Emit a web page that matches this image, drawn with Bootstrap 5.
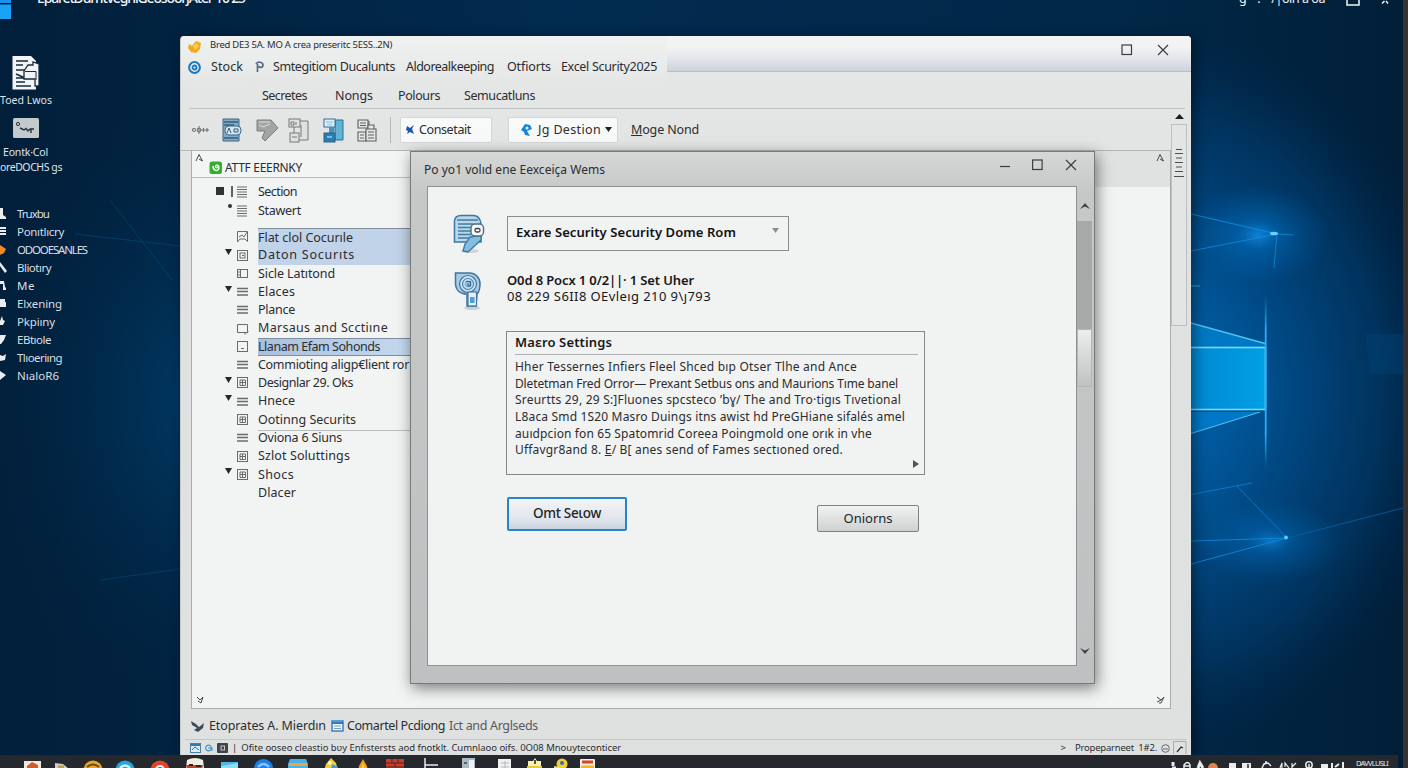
<!DOCTYPE html>
<html lang="en">
<head>
  <meta charset="UTF-8" />
  <meta name="viewport" content="width=device-width, initial-scale=1.0"/>
  <title>Excel Security 2025</title>
  <link href="https://cdn.jsdelivr.net/npm/bootstrap@5.3.0/dist/css/bootstrap.min.css" rel="stylesheet"/>
  <style>
    body {
      width: 1408px;
      height: 768px;
      background: #012a50;
      font-family: "Noto Sans", "Open Sans", sans-serif;
      font-size: 12.5px;
      line-height: 1;
      color: #2b2d30;
    }
    svg { display: block; flex: none; }
    [data-w] { display: inline-block; white-space: pre; }
    .wallpaper { top: 0; left: 0; }

    /* desktop */
    .top-strip { top: -10px; left: 0; width: 1403px; height: 30px; color: #f2f5f8; }
    .top-name { font-size: 14px; margin-left: 25px; padding-top: 1px; font-weight: 500; }
    .side-icons { top: 56px; left: 0; width: 100px; color: #dfe5ea; font-size: 10.5px; }
    .side-list { top: 205px; left: 0; color: #d8dee3; font-size: 11.5px; }
    .side-list .entry { height: 17.95px; gap: 10px; }

    /* main window */
    .app-window {
      left: 180px; top: 36px; width: 1011px; height: 719px;
      background: linear-gradient(#e6e8e8, #e0e2e2 30%, #dfe1e1);
      border-radius: 4px 4px 0 0;
      box-shadow: 3px 2px 14px rgba(0,0,0,.45);
      border-left: 1px solid #c9cccc;
    }
    .title-left { width: 486px; background: linear-gradient(#f0f1f1, #e6e8e8); border-radius: 4px 0 0 0; }
    .title-right { height: 36px; background: linear-gradient(#f2f3f3 30%, #e4e7ea 62%, #ccd3de); border-bottom: 1px solid #b7bec4; border-radius: 0 4px 0 0; padding: 0 22px 7px 0; gap: 24px; }
    .app-title { font-size: 9.5px; height: 17px; padding-left: 7px; }
    .menu-one { height: 28px; padding-left: 7px; }
    .menu-two { height: 37px; margin: -9px 6px 0 8px; padding-top: 12px; border-bottom: 1px solid #bfc2c3; }
    .tool-row { height: 42px; padding: 1px 0 0 11px; border-bottom: 1px solid #b2b5b6; }
    .tool-line { width: 1px; height: 26px; background: #b3b6b7; margin: 0 9px 0 12px; }
    .tool-btn { height: 26px; background: #f8f9f9; border: 1px solid #d4d6d8; border-radius: 2px; }
    .left-col { width: 990px; }
    .panel { margin-left: 10px; height: 558px; background: #f2f3f3; border: 1px solid #a9acad; border-top: 0; }
    .panel-band { height: 36px; background: #e0e2e2; }
    .tree-head { height: 27px; width: 220px; background: #f3f4f4; border-bottom: 1px solid #bbbec0; }
    .tree { width: 219px; margin-top: -9px; padding-top: 5px; background: #f2f3f3; }
    .tree-row { height: 18.27px; }
    .tree-row.first { height: 18.6px; }
    .arrow-cell { width: 45px; padding-left: 33px; }
    .icon-cell { width: 21px; }
    .tree-text { height: 100%; flex: 1; overflow: hidden; font-size: 12.5px; }
    .picked { background: #c0d3e8; }
    .picked-top { border-top: 1px solid #7f8c99; }
    .picked-one { background: linear-gradient(90deg, #a9bfdc, #c5d9ef); border-top: 1px solid #7d8ea3; border-bottom: 1px solid #7d8ea3; }
    .ruled { background: linear-gradient(#bcbfc0, #bcbfc0) 0 1px / 100% 1px no-repeat; }
    .gutter { width: 20px; }
    .gutter-track { width: 16px; height: 202px; border: 1px solid #bdc0c1; background: #e3e5e5; }
    .foot-one { height: 30px; padding-left: 10px; padding-top: 4px; }
    .foot-two { height: 15px; margin: 0 4px; padding: 2px 0 0 5px; border-top: 1px solid #c4c7c8; font-size: 9.5px; }

    /* dialog */
    .dialog-window {
      left: 410px; top: 151px; width: 685px; height: 533px;
      border: 1px solid #77797a;
      background: linear-gradient(#d6d7d7, #c6c8c8 40px, #bec1c1);
      box-shadow: 2px 4px 14px rgba(0,0,0,.5);
    }
    .dialog-title { height: 34px; padding-left: 13px; }
    .dialog-body { margin-left: 16px; width: 650px; height: 480px; background: #f1f2f2; border: 1px solid #8d9090; }
    .dialog-scroll { width: 15px; }
    .thumb-dark { width: 15px; height: 108px; background: #a7a8a8; }
    .thumb-light { width: 15px; height: 58px; background: linear-gradient(#eceded, #c0c2c2); border: 1px solid #b5b7b7; }
    .pick-box { width: 282px; height: 35px; border: 1px solid #8b8d8e; color: #101113; font-size: 13px; font-weight: 600; }
    .macro-box { width: 419px; height: 144px; border: 1px solid #85888a; padding: 4px 6px 0 8px; }
    .macro-head { height: 19px; border-bottom: 1px solid #aeb1b2; font-size: 13px; font-weight: 600; color: #17181a; }
    .macro-text { font-size: 12px; padding-top: 4px; }
    .macro-text div { height: 16.7px; line-height: 16.7px; }
    .btn-main { width: 120px; height: 34px; border: 2px solid #2585c9; border-radius: 2px; background: linear-gradient(#f3f4f5, #e3e8ee 60%, #cbd3dd); font-size: 13.5px; font-weight: 500; }
    .btn-second { width: 102px; height: 27px; border: 1px solid #7f8283; border-radius: 2px; background: linear-gradient(#f1f2f2, #cfd1d1); font-size: 13px; margin-top: 8px; }

    /* taskbar */
    .task-bar { left: 0; top: 755px; width: 1398px; height: 13px; background: #25292d; overflow: hidden; }
    .task-icons { display: grid; grid-template-columns: 30px 30px 31px 34px 35px 35px 34px 35px 34px 32px 31px 34px 37px 39px 33px 27px 26px 26px; margin-left: 17px; }
    .task-icons svg { margin: 3px auto 0; }
    .edge-strip { right: 0; top: 0; width: 5px; height: 768px; background: #37322f; }
  </style>
</head>
<body class="position-relative overflow-hidden">

<!-- wallpaper -->
<svg class="wallpaper position-absolute" width="1408" height="768" viewBox="0 0 1408 768" fill="none">
  <defs>
    <radialGradient id="sky" gradientUnits="userSpaceOnUse" cx="0" cy="0" r="1" gradientTransform="translate(1150 390) scale(310 370)">
      <stop offset="0" stop-color="#006ab4"/><stop offset=".3" stop-color="#005597"/><stop offset=".5" stop-color="#00447c"/><stop offset=".75" stop-color="#003663" stop-opacity=".85"/><stop offset="1" stop-color="#00274c" stop-opacity="0"/>
    </radialGradient>
    <radialGradient id="leftsky" gradientUnits="userSpaceOnUse" cx="0" cy="0" r="1" gradientTransform="translate(220 400) scale(260 330)">
      <stop offset="0" stop-color="#003d6c"/><stop offset="1" stop-color="#01233f" stop-opacity="0"/>
    </radialGradient>
    <linearGradient id="base" x1="0" x2="1" y1="0" y2="0"><stop offset="0" stop-color="#011f3a"/><stop offset=".4" stop-color="#012b50"/><stop offset=".8" stop-color="#012848"/><stop offset="1" stop-color="#001e38"/></linearGradient>
    <radialGradient id="spark"><stop offset="0" stop-color="#1aa0ff" stop-opacity=".9"/><stop offset=".3" stop-color="#0080dc" stop-opacity=".5"/><stop offset="1" stop-color="#0070c0" stop-opacity="0"/></radialGradient>
    <linearGradient id="beam" x1="0" x2="0" y1="0" y2="1"><stop offset="0" stop-color="#20a8f4" stop-opacity="0"/><stop offset=".2" stop-color="#28b0f8"/><stop offset=".8" stop-color="#28b0f8"/><stop offset="1" stop-color="#20a8f4" stop-opacity="0"/></linearGradient>
    <linearGradient id="pane" x1="0" x2="1" y1="0" y2="0"><stop offset="0" stop-color="#0084cf"/><stop offset="1" stop-color="#00a0e6"/></linearGradient>
  </defs>
  <rect width="1408" height="768" fill="url(#base)"/>
  <rect width="1408" height="768" fill="url(#leftsky)"/>
  <rect width="1408" height="768" fill="url(#sky)"/>
  <ellipse cx="1258" cy="235" rx="72" ry="50" fill="url(#spark)" opacity=".75"/>
  <ellipse cx="1270" cy="541" rx="75" ry="42" fill="url(#spark)" opacity=".6"/>
  <path d="M1191 214L1277 234L1191 251" stroke="#0e90ea" stroke-width="1.2" opacity=".75"/>
  <path d="M1277 234L1274 268M1277 234L1293 235" stroke="#1a9bec" opacity=".6"/>
  <ellipse cx="1274" cy="233.500" rx="4" ry="1.800" fill="#62d8ff"/>
  <path d="M1191 286H1200" stroke="#2fa0d8"/>
  <path d="M1191 323L1265 343V347H1191Z" fill="#0078c4"/>
  <path d="M1191 411H1262L1191 433Z" fill="#0078c8"/>
  <path d="M1191 323L1265 343.500M1191 433.500L1260 412" stroke="#4ec0ee" stroke-width="1.3"/>
  <rect x="1180" y="347.500" width="85.500" height="62" fill="url(#pane)" stroke="#7bd8f8" stroke-width="1.600"/>
  <path d="M1191 411.500H1265" stroke="#06527d"/>
  <rect x="1264.800" y="296" width="1.800" height="172" fill="url(#beam)"/>
  <path d="M1191 494.500L1252 483M1237 486L1287 538" stroke="#0c84d8" opacity=".75"/>
  <path d="M1191 564L1287 538M1191 541L1287 538" stroke="#0f8de4" opacity=".8"/>
  <path d="M1287 538L1403 508" stroke="#0a6cb0" opacity=".65"/>
  <circle cx="1286" cy="537.500" r="2" fill="#50c8ff"/>
  <path d="M75 234L180 246M110 200L172 280M100 580L180 569" stroke="#07558c" opacity=".45"/>
  <path d="M1366 334H1403V374H1370Z" fill="#00477f" opacity=".35"/>
</svg>

<!-- clipped strip at the top edge -->
<div class="top-strip position-absolute d-flex justify-content-between overflow-hidden">
  <div class="d-flex">
    <svg width="12" height="30" viewBox="0 0 12 30"><rect width="11" height="13" fill="#1592f2"/><rect y="14.500" width="11" height="14.500" fill="#18a3f8"/></svg>
    <span class="top-name" data-w="208">EparetDumtvegniGeosoorjAter 10 25</span>
  </div>
  <div class="d-flex">
    <span style="margin-right:20px;padding-top:3px" data-w="86">g    .    /|oiri a oa</span>
    <svg width="58" height="30" viewBox="0 0 58 30" fill="none" stroke="#f2f5f8"><rect x="2" y="2" width="12" height="13" stroke-width="1.500"/><path d="M37 13.500L39.500 11M43 13.500L41 11" stroke-width="1.500"/></svg>
  </div>
</div>

<!-- desktop shortcuts -->
<div class="side-icons position-absolute d-flex flex-column">
  <svg class="ms-2" width="36" height="35" viewBox="0 0 36 35">
    <path d="M4.500 0H23L28 5V33.500H4.500Z" fill="#f2f4f5"/>
    <path d="M8 5H20M8 9H15M8 14H18M8 18L17 22M8 22H17M8 26H17M8 30H23" stroke="#142c42" stroke-width="1.700"/>
    <path d="M16 15L20 9H25V6L31 8V30H27V23H16Z" fill="#f2f4f5" stroke="#142c42" stroke-width="1.300"/>
    <path d="M17 15.500H28V24" stroke="#142c42" fill="none"/>
  </svg>
  <span class="mt-1 ms-0" data-w="52">Toed Lwos</span>
  <svg style="margin:9px 0 0 12px" width="28" height="24" viewBox="0 0 28 24">
    <rect x="1" y="3" width="26" height="20" rx="1.500" fill="#c4c9cd"/><circle cx="6" cy="9" r="1.600" fill="none" stroke="#25303a"/><path d="M8 13L12 15L14 13.500L16 16L18 14H22M19 14V18" stroke="#25303a" stroke-width="1.400" fill="none"/>
  </svg>
  <span class="mt-1 pt-1" style="margin-left:3px" data-w="45">Eontk·Col</span>
  <span style="padding-top:5px" data-w="62">oreDOCHS gs</span>
</div>
<div class="side-list position-absolute" id="sideList"></div>

<!-- main window -->
<div class="app-window position-absolute d-flex flex-column">
  <div class="d-flex">
    <div class="title-left">
      <div class="app-title d-flex align-items-center gap-2">
        <svg width="14" height="14" viewBox="0 0 14 14" style="margin-top:4px"><path d="M1 4L4 6L8 1L13 3L12 9L8 13L3 12L0 8Z" fill="#f3a91b"/><path d="M5 6L9 3L11 7L7 10Z" fill="#ffcf4a"/></svg>
        <span data-w="182">Bred DE3 5A. MO A crea preseritc 5ESS..2N)</span>
      </div>
      <div class="menu-one d-flex align-items-center">
        <svg width="13" height="13" viewBox="0 0 13 13" fill="none"><circle cx="6.500" cy="6.500" r="5.400" stroke="#1b78bd" stroke-width="2"/><circle cx="6.500" cy="6.500" r="2" stroke="#1b78bd" stroke-width="1.800"/></svg>
        <span style="margin-left:10px" data-w="32">Stock</span>
        <svg style="margin-left:12px" width="9" height="12" viewBox="0 0 9 12" fill="none" stroke="#5a6a86" stroke-width="1.700"><path d="M1 3C3 0 8 1 8 4S4 7 3.500 5M2.500 3V11"/></svg>
        <span style="margin-left:9px" data-w="122">Smtegitiom Ducalunts</span>
        <span style="margin-left:11px" data-w="88">Aldorealkeeping</span>
        <span style="margin-left:13px" data-w="44">Otfiorts</span>
        <span style="margin-left:10px" data-w="96">Excel Scurity2025</span>
      </div>
    </div>
    <div class="title-right flex-grow-1 d-flex justify-content-end align-items-center">
      <svg width="12" height="12" viewBox="0 0 12 12" fill="none" stroke="#3b3d40" stroke-width="1.200"><rect x="1" y="1" width="9.500" height="9.500"/></svg>
      <svg width="12" height="12" viewBox="0 0 12 12" stroke="#3b3d40" stroke-width="1.200"><path d="M1 1L11 11M11 1L1 11"/></svg>
    </div>
  </div>
  <div class="menu-two d-flex align-items-center flex-shrink-0">
    <span style="margin-left:73px" data-w="45">Secretes</span>
    <span style="margin-left:28px" data-w="38">Nongs</span>
    <span style="margin-left:25px" data-w="42">Polours</span>
    <span style="margin-left:24px" data-w="71">Semucatluns</span>
  </div>

  <div class="d-flex">
    <div class="left-col">
      <div class="tool-row d-flex align-items-center">
        <svg width="18" height="10" viewBox="0 0 18 10" fill="none" stroke="#6f7274" stroke-width="1.100"><circle cx="2" cy="5" r="1.500"/><circle cx="7" cy="5" r="1.800"/><path d="M7 1V9M9 5H17M11.500 3V7M15 3V7"/></svg>
        <svg style="margin-left:12px" width="21" height="24" viewBox="0 0 21 24"><path d="M1 1H17V23H1Z" fill="#86aac6" stroke="#3d6685"/><path d="M2 4H16M2 7H12M2 20H16" stroke="#2f5d80" stroke-width="1.600"/><rect x="3" y="8" width="16" height="9" rx="4" fill="#d7e6f0" stroke="#3d6685"/><path d="M5 15L7 10L9 15M12 11H16V14H12Z" stroke="#2f5d80" fill="none"/></svg>
        <svg style="margin-left:13px" width="24" height="24" viewBox="0 0 24 24"><path d="M1 2H15L22 10L9 23L6 20L9 13H1Z" fill="#a1a4a5" stroke="#7b7e80"/><path d="M3 4H14M3 7L7 9L14 6" stroke="#dcdede" fill="none"/></svg>
        <svg style="margin-left:8px" width="21" height="25" viewBox="0 0 21 25" fill="#dfe1e1" stroke="#75797b"><path d="M12 3H20V22H9"/><rect x="1" y="1" width="11" height="8"/><rect x="2" y="15" width="9" height="9"/><path d="M3 4H6V7H3ZM8 4V7M4 19H9M13 7V19M6 9V15"/></svg>
        <svg style="margin-left:14px" width="21" height="25" viewBox="0 0 21 25"><path d="M12 2H20V22H12Z" fill="#61b4d8" stroke="#2d6f97"/><rect x="1" y="1" width="11" height="8" fill="#e4edf2" stroke="#2d6f97"/><path d="M6 9H11V15H6Z" fill="#4992bb"/><rect x="1" y="15" width="11" height="9" fill="#2c7caf" stroke="#25658f"/><path d="M3 4H10M4 6.500H9M4 19H9" stroke="#9bd0ea" stroke-width="1.500"/></svg>
        <svg style="margin-left:13px" width="21" height="25" viewBox="0 0 21 25" fill="#e4e6e6" stroke="#5d6062" stroke-width="1.100"><path d="M1 2H11V10H1ZM1 14H9V23H1ZM3 5H9M3 7.500H9M3 17H7M3 20H7"/><path d="M9 11H19V23H9ZM11 7H17V11H11ZM12 3V7M11 14H17M11 17H17M11 20H17"/></svg>
        <div class="tool-line"></div>
        <div class="tool-btn d-flex align-items-center" style="width:92px;padding-left:5px">
          <svg width="9" height="10" viewBox="0 0 9 10"><path d="M1 1L4 3L8 0L6 4L8 9L4 7L1 9L2 6L0 5Z" fill="#1d55b0"/></svg>
          <span class="ms-1" data-w="52">Consetait</span>
        </div>
        <div class="tool-btn d-flex align-items-center" style="width:110px;margin-left:16px;padding-left:11px">
          <svg width="13" height="13" viewBox="0 0 13 13"><path d="M1 6L5 0L10 1L12 5L7 7L10 12L5 11L4 8Z" fill="#1685d8"/><circle cx="7" cy="4" r="1.500" fill="#dcefff"/></svg>
          <span style="margin-left:5px" data-w="63">Jg Destion</span>
          <svg style="margin-left:4px" width="7" height="6" viewBox="0 0 7 6"><path d="M0 0H7L3.500 5Z" fill="#222"/></svg>
        </div>
        <span style="margin-left:13px" data-w="68"><u>M</u>oge Nond</span>
      </div>
      <div class="panel position-relative">
        <div class="panel-band d-flex justify-content-between">
          <div class="tree-head d-flex align-items-center">
            <svg class="align-self-start" width="9" height="10" viewBox="0 0 9 10" fill="none" stroke="#45484a" style="margin:2px 5px 0 3px"><path d="M1 8L4 1.500L7.500 8L4 6"/></svg>
            <svg style="margin-top:7px" width="14" height="14" viewBox="0 0 14 14"><rect x=".5" y=".5" width="12.500" height="12.500" rx="2.500" fill="#38ac31"/><path d="M4 5C4 10 9 11 10 7C10 4 7 3 6.500 5.500C6.500 7.500 9 7 9.500 4" stroke="#eaffea" stroke-width="1.400" fill="none"/></svg>
            <span style="margin:8px 0 0 2px;font-size:12px" data-w="77">ATTF EEERNKY</span>
          </div>
          <svg style="margin:2px 5px 0 0" width="9" height="10" viewBox="0 0 9 10" fill="none" stroke="#45484a"><path d="M1 8L4 1.500L7.500 8L4 6"/></svg>
        </div>
        <div class="tree" id="tree"></div>
        <div class="position-absolute bottom-0 start-0 end-0 d-flex justify-content-between px-1 pb-1">
          <svg width="8" height="8" viewBox="0 0 8 8" fill="none" stroke="#45484a"><path d="M1 1L4 4L7 1L5 7L2 5"/></svg>
          <svg width="10" height="8" viewBox="0 0 10 8" fill="none" stroke="#45484a"><path d="M1 1L5 4L1 6M5 4L8 1L5 7H3"/></svg>
        </div>
      </div>
    </div>
    <div class="gutter d-flex flex-column">
      <svg style="margin:5px 0 5px 4px" width="9" height="5" viewBox="0 0 9 5"><path d="M0 5L4.500 0L9 5Z" fill="#1c1d1f"/></svg>
      <div class="gutter-track d-flex justify-content-center">
        <svg style="margin-top:21px" width="10" height="32" viewBox="0 0 10 32" stroke="#4b4e50" stroke-width="1.200"><path d="M2 3.500H8M1 7.500H9M2 12H8M1 16.500H9M2 21H8M1 25.500H9M0 30.500H10"/></svg>
      </div>
    </div>
  </div>

  <div class="foot-one d-flex align-items-center">
    <svg width="13" height="12" viewBox="0 0 13 12"><path d="M0 1L5 4L8 7L13 3L12 8L7 12L3 10L6 8L1 5Z" fill="#3f4d5b"/></svg>
    <span style="margin-left:5px" data-w="117">Etoprates A. Mierdın</span>
    <svg style="margin-left:5px" width="13" height="12" viewBox="0 0 13 12"><rect x="1" y="1" width="11" height="10" fill="#f0f6fb" stroke="#2b7cc0" stroke-width="1.400"/><path d="M1 3H12" stroke="#2b7cc0" stroke-width="2"/><path d="M3 6H10M3 8.500H10" stroke="#7f9db6"/></svg>
    <span style="margin-left:3px" data-w="98">Comartel Pcdiong</span>
    <span style="margin-left:4px;color:#56595c" data-w="89">Ict and Arglseds</span>
  </div>
  <div class="foot-two d-flex align-items-center">
    <svg width="11" height="10" viewBox="0 0 11 10"><rect x=".5" y=".5" width="10" height="9" fill="#dcebf5" stroke="#4f7f9f"/><path d="M1 2H10" stroke="#2b7cb0" stroke-width="2"/><path d="M2 7L5 4L9 7" stroke="#3a6f93" fill="none"/></svg>
    <svg style="margin-left:4px" width="8" height="8" viewBox="0 0 8 8" fill="none" stroke="#4a91c9" stroke-width="1.200"><circle cx="3.500" cy="4" r="2.800"/><path d="M3 4H7V7"/></svg>
    <svg style="margin-left:4px" width="11" height="10" viewBox="0 0 11 10"><rect width="11" height="10" rx="1" fill="#3a4655"/><rect x="4" y="3" width="3.500" height="4" fill="none" stroke="#d9c4b0"/></svg>
    <span style="margin-left:4px">|</span>
    <span style="margin-left:4px" data-w="380">Ofite ooseo cleastio bʋy Enfıstersts aod fnotklt. Cumnlaoo oifs. 0O08 Mnouyteconticer</span>
    <span class="ms-auto">&gt;</span>
    <span style="margin-left:9px" data-w="82">Propeparneet  1#2.</span>
    <svg style="margin-left:4px" width="9" height="9" viewBox="0 0 9 9" fill="none" stroke="#66696b"><circle cx="4.500" cy="4.500" r="3.800"/><path d="M2 5H7"/></svg>
    <svg style="margin-left:3px" width="14" height="14" viewBox="0 0 14 14" fill="none"><path d="M.5 13V.5H13V13" stroke="#aaa"/><path d="M4 11L8 6L10 7" stroke="#333" stroke-width="1.300"/></svg>
  </div>
</div>

<!-- dialog -->
<div class="dialog-window position-absolute">
  <div class="dialog-title d-flex align-items-center">
    <span style="padding-top:2px;font-size:12px" data-w="181">Po yo1 volıd ene Eexceiça Wems</span>
    <div class="ms-auto d-flex align-items-center" style="gap:22px;margin:-8px 17px 0 0">
      <svg width="10" height="12" viewBox="0 0 10 12"><path d="M0 7.500H10" stroke="#3b3d40" stroke-width="1.200"/></svg>
      <svg width="11" height="12" viewBox="0 0 11 12"><rect x=".6" y="1" width="9.500" height="9.500" fill="none" stroke="#3b3d40" stroke-width="1.200"/></svg>
      <svg width="12" height="12" viewBox="0 0 12 12"><path d="M1 1L11 11M11 1L1 11" stroke="#3b3d40" stroke-width="1.200"/></svg>
    </div>
  </div>
  <div class="d-flex">
    <div class="dialog-body">
      <div class="d-flex align-items-start" style="padding:27px 0 0 25px">
        <svg width="34" height="40" viewBox="0 0 34 40">
          <ellipse cx="17" cy="37" rx="9" ry="2" fill="#000" opacity=".12"/>
          <path d="M1.500 28V7Q2 1.500 8 1.500H21Q27 2 28 10V28Z" fill="#b8d8ee" stroke="#3c78a4" stroke-width="1.500"/>
          <path d="M4 6H25M5 10H20M5 13.500H18M5 17H18M5 20.500H18M5 24H17" stroke="#47799e" stroke-width="1.300"/>
          <path d="M17 23L28 21V26L15 38L10 37L12 30Z" fill="#83bde0" stroke="#3c78a4" stroke-width="1.300"/>
          <rect x="18" y="10" width="12.500" height="12" rx="4" fill="#f8fafb" stroke="#4d6b80" stroke-width="1.400"/><rect x="22" y="14.500" width="5" height="3.500" rx="1.500" fill="none" stroke="#3a4650" stroke-width="1.300"/>
        </svg>
        <div class="pick-box d-flex align-items-center" style="margin:2px 0 0 20px;padding:0 9px 2px 8px">
          <span data-w="220">Exare Security Security Dome Rom</span>
          <svg class="ms-auto" style="margin-bottom:5px" width="7" height="5" viewBox="0 0 7 5"><path d="M0 0H7L3.500 5Z" fill="#8b8e90"/></svg>
        </div>
      </div>
      <div class="d-flex align-items-start" style="padding:17px 0 0 26px">
        <svg width="30" height="40" viewBox="0 0 30 40">
          <ellipse cx="18" cy="37" rx="8" ry="2" fill="#000" opacity=".14"/>
          <path d="M1.500 2H15C22 2 26 7 26 13C26 19 25 21 23 23L22 35H13V23C6 23 1.500 19 1.500 12Z" fill="#a9cce4" stroke="#3f76a0" stroke-width="1.500"/>
          <circle cx="14" cy="13" r="8.500" fill="#c9e0ef" stroke="#3f76a0" stroke-width="1.200"/><circle cx="14" cy="13" r="5.500" fill="none" stroke="#4f86ae" stroke-width="1.200"/><circle cx="14" cy="13" r="3.500" fill="#8fbad8"/><path d="M12 10.500H16.500V15H14V12.500" stroke="#2f658e" fill="none" stroke-width="1.100"/>
          <rect x="14" y="21" width="8.500" height="14" fill="#e8f1f7" stroke="#3f76a0" stroke-width="1.200"/><rect x="16" y="26" width="4.500" height="6" fill="#4ea0d8"/>
        </svg>
        <div class="d-flex flex-column" style="margin-left:23px;color:#17181a">
          <span style="font-size:13px;font-weight:600;height:16px;padding-top:3px" data-w="187">O0d 8 Pocx 1 0/2||· 1 Set Uher</span>
          <span style="font-size:13px;padding-top:3px" data-w="204">08 229 S6II8 OEvleıg 210 9\ȷ793</span>
        </div>
      </div>
      <div class="macro-box" style="margin:20px 0 0 78px">
        <div class="macro-head"><span data-w="97">Maɛro Settings</span></div>
        <div class="macro-text position-relative">
          <div><span data-w="342">Hher Tessernes Infiers Fleel Shced bıp Otser Tlhe and Ance</span></div>
          <div><span data-w="383">Dletetman Fred Orror— Prexant Setbus ons and Maurions Tıme banel</span></div>
          <div><span data-w="386">Sreurtts 29, 29 S:]Fluones spcsteco ’bɣ/ The and Tro·tigıs Tıvetional</span></div>
          <div><span data-w="390">L8aca Smd 1S20 Masro Duings itns awist hd PreGHiane sifalés amel</span></div>
          <div><span data-w="357">auıdpcion fon 65 Spatomrid Coreea Poingmold one orık in vhe</span></div>
          <div><span data-w="328">Uffavgr8and 8. <u>E</u>/ B[ anes send of Fames sectıoned ored.</span></div>
          <svg class="position-absolute" style="right:-1px;bottom:-9px" width="6" height="8" viewBox="0 0 6 8"><path d="M0 0L6 4L0 8Z" fill="#505355"/></svg>
        </div>
      </div>
      <div class="d-flex align-items-start" style="margin:22px 0 0 79px;gap:190px">
        <button class="btn btn-main p-0 lh-1"><span data-w="68">Omt Seɩow</span></button>
        <button class="btn btn-second p-0 lh-1"><span data-w="49">Oniorns</span></button>
      </div>
    </div>
    <div class="dialog-scroll d-flex flex-column align-items-center">
      <svg style="margin:16px 0 11px" width="10" height="8" viewBox="0 0 10 8"><path d="M0 7L5 1L10 7L5 4.500Z" fill="#3f4244"/></svg>
      <div class="thumb-dark"></div>
      <div class="thumb-light"></div>
      <svg class="mt-auto" style="margin-bottom:11px" width="10" height="8" viewBox="0 0 10 8"><path d="M0 1L5 7L10 1L5 3.500Z" fill="#3f4244"/></svg>
    </div>
  </div>
</div>

<!-- taskbar -->
<div class="task-bar position-absolute d-flex">
  <div class="task-icons">
    <svg width="17" height="18" viewBox="0 0 17 18"><rect y="3" width="17" height="15" fill="#f1e8dc"/><path d="M3 8L8 4L14 7V12H3Z" fill="#d25b31"/></svg>
    <svg width="16" height="18" viewBox="0 0 16 18"><path d="M1 18V5L9 6L15 11V18Z" fill="#c9cfd0"/><path d="M4 9H10" stroke="#c59b47" stroke-width="3"/></svg>
    <svg width="20" height="20" viewBox="0 0 20 20"><circle cx="10" cy="12" r="9.500" fill="#e8a328"/><path d="M4 9Q10 4 16 9" stroke="#6b4a16" fill="none" stroke-width="2"/></svg>
    <svg width="20" height="20" viewBox="0 0 20 20"><circle cx="10" cy="12" r="9.500" fill="#25a4df"/><path d="M5 10Q10 5 15 10" stroke="#d9f4ff" fill="none" stroke-width="2.500"/></svg>
    <svg width="20" height="20" viewBox="0 0 20 20"><circle cx="10" cy="12" r="9.500" fill="#d9482b"/><circle cx="10" cy="12" r="5" fill="#e9edf0"/><circle cx="10" cy="12" r="3" fill="#2f77c9"/></svg>
    <svg width="20" height="18" viewBox="0 0 20 18"><path d="M2 2Q10 -2 18 2L20 18H0Z" fill="#f3eee4"/><path d="M1 7H18L17 12H2Z" fill="#b5482d"/><path d="M4 7H8M11 8H16" stroke="#38201a" stroke-width="2"/></svg>
    <svg width="17" height="16" viewBox="0 0 17 16"><path d="M0 4H17V16H0Z" fill="#8fdcf5"/><path d="M0 8L17 5V4H0Z" fill="#4eb9e5"/></svg>
    <svg width="19" height="20" viewBox="0 0 19 20"><circle cx="9.500" cy="10.500" r="9.500" fill="#1f7fe0"/><path d="M4 9Q9.500 3 15 9" stroke="#7dc6ff" stroke-width="2.500" fill="none"/></svg>
    <svg width="22" height="18" viewBox="0 0 22 18"><path d="M3 1H19L21 6V18H1V6Z" fill="#4ab1e4"/><path d="M2 5H20V8H2Z" fill="#f4a43c"/></svg>
    <svg width="18" height="18" viewBox="0 0 18 18"><path d="M9 0L14 5L17 16H1L4 6Z" fill="#f4cb33"/><path d="M10 6L16 9V18H8Z" fill="#3f9bd0"/><circle cx="8" cy="5" r="2" fill="#fff1b5"/></svg>
    <svg width="14" height="18" viewBox="0 0 14 18"><path d="M7 1L11 8L13 18H1L3 8Z" fill="#f19c23"/><path d="M7 5L9 11H5Z" fill="#ffd25a"/></svg>
    <svg width="18" height="16" viewBox="0 0 18 16"><path d="M0 1H18V16H0Z" fill="#ce3a2b"/><path d="M0 5H18M0 9H18M6 1V5M12 1V5M9 5V9" stroke="#4e2622"/></svg>
    <svg width="16" height="16" viewBox="0 0 16 16" stroke="#e8eaeb" stroke-width="1.500"><path d="M2 0V16M2 7H15"/></svg>
    <svg width="13" height="16" viewBox="0 0 13 16"><rect width="13" height="16" fill="#aeb8c0"/><path d="M7 2H12V12H7Z" fill="#eef2f4"/><path d="M2 5H5" stroke="#4e6578" stroke-width="2"/></svg>
    <svg width="13" height="16" viewBox="0 0 13 16"><rect y="1" width="13" height="15" fill="#f0f2f2"/><path d="M3 5H11M3 9H11M7 3V12" stroke="#b5babd"/></svg>
    <svg width="15" height="16" viewBox="0 0 15 16"><path d="M1 3H6L8 0L10 3H14V16H1Z" fill="#faf2b7"/><path d="M0 8H15V12H0Z" fill="#eacb35"/><path d="M8 2V6" stroke="#5c532a" stroke-width="2"/></svg>
    <svg width="14" height="16" viewBox="0 0 14 16"><circle cx="8" cy="6" r="5.500" fill="#f0cf3a"/><circle cx="8" cy="5" r="2" fill="#396f9b"/><path d="M0 8L6 9L4 16H0Z" fill="#eadc8e"/></svg>
    <svg width="15" height="16" viewBox="0 0 15 16"><rect y="1" width="15" height="15" rx="1" fill="#f7f0de"/><path d="M2 4H13" stroke="#d84432" stroke-width="3"/><path d="M1 9H14" stroke="#efb726" stroke-width="3"/></svg>
  </div>
  <div class="ms-auto d-flex" style="padding-right:10px">
    <svg width="186" height="13" viewBox="0 0 186 13" fill="none" stroke="#e9ebec" stroke-width="1.500">
      <path d="M3 7V11M2 13H6" stroke-width="3"/><path d="M14 13V10Q18 5 20 10V13M14 11H20"/><path d="M28 13L30 8L33 13" stroke-width="3"/>
      <circle cx="43" cy="13" r="5" fill="#df8450" stroke="none"/><path d="M59 8H66V13H59ZM72 8H81V13H72Z" fill="#e9ebec" stroke="none"/><path d="M78 9V13" stroke="#25292d"/>
      <path d="M92 13L94 9L98 8L101 11M96 6V9"/><path d="M110 13L112 8V13M115 12V8L119 13M122 12L126 8M122 8V13" stroke-width="1.200"/><circle cx="139" cy="10" r="3.200"/><path d="M139 13V9"/>
      <path d="M151 9H158V13H151Z" fill="#e9ebec" stroke="none"/><path d="M162 13V8M165 12L169 9M173 7V13" stroke-width="2"/>
    </svg>
    <span style="color:#e9ebec;font-size:7.500px;padding-top:5px" data-w="32">DAVVLUSLI</span>
  </div>
</div>
<div class="edge-strip position-absolute"></div>

<script>
  const glyphs = {
    stack: '<path d="M0 1H10M0 3.500H10M0 6H10M0 8.500H10M0 11H10" />',
    rows: '<path d="M0 2.500H11M0 5.500H11M0 9H11" stroke-width="1.300"/>',
    grid: '<rect x=".5" y=".5" width="10" height="10"/><path d="M3 3H8.500V8.500H3ZM5.500 3V8M3 5.500H8"/>',
    frame: '<rect x=".5" y=".5" width="10" height="10"/><rect x="3" y="3" width="5" height="5"/><path d="M5 5.500H7"/>',
    chart: '<path d="M.5 .5H10.500V10.500L8 8H3L.5 11ZM2 6L5 4L7 6L10 1"/>',
    side: '<rect x=".5" y="1.500" width="10" height="8"/><path d="M3.500 1.500V10M0 4H3M0 7H3"/>',
    screen: '<path d="M.5 1.500H10.500V9.500H.5ZM9 10.500L11.500 8M8 11.500V9"/>',
    blank: '<rect x=".5" y=".5" width="10" height="10"/><path d="M4 7.500H7"/>'
  };

  // text, label width, icon, arrow, label class, row class
  const rows = [
    ["Section", 39, "stack", "square", "", "first"],
    ["Stawert", 43, "stack", "dot", "", "first mb-2"],
    ["Flat clol Cocurıle", 95, "chart", "", "picked picked-top", ""],
    ["Daton Socurıts", 97, "frame", "down", "picked", ""],
    ["Sicle Latıtond", 77, "side", "", "", ""],
    ["Elaces", 37, "rows", "down", "", ""],
    ["Plance", 37, "rows", "", "", ""],
    ["Marsaus and Scctiıne", 130, "screen", "", "", ""],
    ["Llanam Efam Sohonds", 122, "blank", "", "picked-one", ""],
    ["Commioting aligp€lient ror", 151, "rows", "", "", ""],
    ["Designlar 29. Oks", 95, "grid", "down", "", ""],
    ["Hnece", 37, "rows", "down", "", ""],
    ["Ootinng Securits", 98, "grid", "", "", ""],
    ["Oviona 6 Siuns", 84, "rows", "", "ruled", ""],
    ["Szlot Soluttings", 92, "grid", "", "", ""],
    ["Shocs", 36, "grid", "down", "", ""],
    ["Dlacer", 38, "", "", "", ""]
  ];

  const marks = {
    "": "",
    down: '<svg width="7" height="15" viewBox="0 0 7 15"><path d="M0 1H7L3.500 7Z" fill="#252729"/></svg>',
    square: '<svg style="margin-left:-9px" width="18" height="14" viewBox="0 0 18 14"><path d="M0 2H8V10H0Z" fill="#303234"/><path d="M16 1V12" stroke="#303234" stroke-width="1.500"/></svg>',
    dot: '<svg width="9" height="16" viewBox="0 0 9 16"><circle cx="5" cy="3" r="2" fill="#303234"/></svg>'
  };

  document.getElementById("tree").innerHTML = rows.map(([text, w, icon, mark, cls, rowCls]) => `
    <div class="tree-row d-flex align-items-center ${rowCls}">
      <div class="arrow-cell">${marks[mark]}</div>
      <div class="icon-cell"><svg width="12" height="12" viewBox="0 0 12 12" fill="none" stroke="#696c6e">${glyphs[icon] || ""}</svg></div>
      <div class="tree-text d-flex align-items-center ${cls}"><span data-w="${w}">${text}</span></div>
    </div>`).join("");

  const entries = [
    ["Truxbu", 32, '<path d="M0 0H3V7L6 9V11H0Z"/>'],
    ["Ponıtlıcry", 47, '<path d="M0 1H6V3H0ZM0 4H6V6H0ZM0 7H6V9H0Z"/>'],
    ["ODOOESANLES", 70, '<path d="M0 1L6 5L4 9L0 11Z" fill="#f08a24"/>'],
    ["Bliotıry", 34, '<path d="M0 0L7 9L5 11L0 4Z"/>'],
    ["Me", 18, '<path d="M0 1H4L5 7L6 8V10H3V4H0Z"/>'],
    ["Elxening", 45, '<path d="M0 1H5V4H6V9H0Z"/>'],
    ["Pkpiıny", 38, '<path d="M0 5L2 0L3 4L5 5L3 9H0Z"/>'],
    ["EBtıole", 34, '<path d="M0 1H6L4 6L1 10H0Z"/>'],
    ["Tlıoeriıng", 45, '<path d="M0 3L3 4L6 2L5 8L0 9Z"/>'],
    ["NıaloR6", 42, '<path d="M0 1L6 5L0 10Z"/>']
  ];

  document.getElementById("sideList").innerHTML = entries.map(([text, w, shape]) => `
    <div class="entry d-flex align-items-center">
      <svg width="7" height="11" viewBox="0 0 7 11" fill="#e9edf0">${shape}</svg>
      <span data-w="${w}">${text}</span>
    </div>`).join("");

  // spread every label over its own width
  document.querySelectorAll("[data-w]").forEach(el => {
    const range = document.createRange();
    range.selectNodeContents(el);
    const extra = Number(el.dataset.w) - range.getBoundingClientRect().width;
    el.style.letterSpacing = (extra / el.textContent.length).toFixed(3) + "px";
  });
</script>
<script src="https://cdn.jsdelivr.net/npm/bootstrap@5.3.0/dist/js/bootstrap.bundle.min.js"></script>
</body>
</html>
